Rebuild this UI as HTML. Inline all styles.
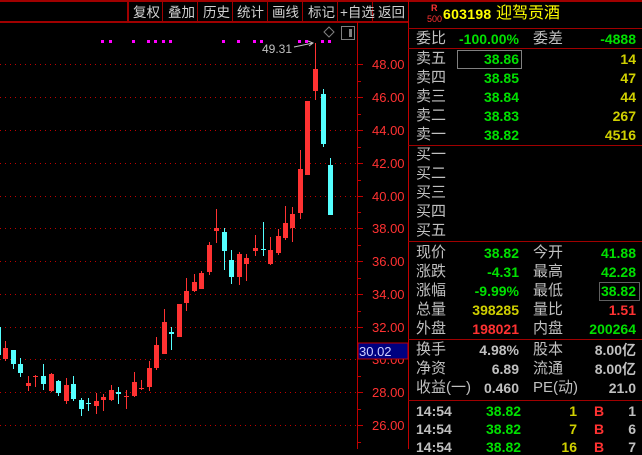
<!DOCTYPE html>
<html><head><meta charset="utf-8"><style>
body{margin:0;background:#000;width:642px;height:449px;overflow:hidden;position:relative;font-family:"Liberation Sans","Noto Sans CJK SC",sans-serif}
.t{position:absolute;white-space:nowrap;line-height:1}
.l{color:#c0c0c0;font-size:15px}
.n{font-size:14px;font-weight:bold}
.g{color:#00e000}.y{color:#d0d000}.r{color:#ff3232}.w{color:#c0c0c0}
.hr{position:absolute;left:408px;width:234px;height:1px;background:#a00000}
</style></head><body>
<svg width="642" height="449" style="position:absolute;left:0;top:0" font-family="Liberation Sans, Noto Sans CJK SC, sans-serif">
<rect x="0" y="0" width="642" height="2" fill="#a00000"/>
<rect x="0" y="21" width="409" height="2" fill="#a00000"/>
<rect x="127" y="2" width="2" height="19" fill="#a00000"/>
<g fill="#a00000"><rect x="162" y="2" width="1" height="19"/><rect x="197" y="2" width="1" height="19"/><rect x="232" y="2" width="1" height="19"/><rect x="267" y="2" width="1" height="19"/><rect x="302" y="2" width="1" height="19"/><rect x="337" y="2" width="1" height="19"/><rect x="372" y="2" width="1" height="19"/></g>
<g fill="#d0d0d0" font-size="13.5"><text x="133" y="17">复权</text><text x="168" y="17">叠加</text><text x="203" y="17">历史</text><text x="237" y="17">统计</text><text x="272" y="17">画线</text><text x="308" y="17">标记</text><text x="340" y="17">+自选</text><text x="378" y="17">返回</text></g>
<rect x="357" y="22" width="1" height="427" fill="#c00000"/>
<rect x="408" y="0" width="1" height="449" fill="#c00000"/>
<g stroke="#c00000" stroke-dasharray="1,4" stroke-width="1">
<line x1="0" y1="64.5" x2="356" y2="64.5"/><line x1="0" y1="97.5" x2="356" y2="97.5"/><line x1="0" y1="130.5" x2="356" y2="130.5"/><line x1="0" y1="163.5" x2="356" y2="163.5"/><line x1="0" y1="196.5" x2="356" y2="196.5"/><line x1="0" y1="228.5" x2="356" y2="228.5"/><line x1="0" y1="261.5" x2="356" y2="261.5"/><line x1="0" y1="294.5" x2="356" y2="294.5"/><line x1="0" y1="327.5" x2="356" y2="327.5"/><line x1="0" y1="359.5" x2="356" y2="359.5"/><line x1="0" y1="392.5" x2="356" y2="392.5"/><line x1="0" y1="425.5" x2="356" y2="425.5"/>
</g>
<g fill="#c00000"><rect x="358" y="64" width="5" height="1"/><rect x="358" y="97" width="5" height="1"/><rect x="358" y="130" width="5" height="1"/><rect x="358" y="163" width="5" height="1"/><rect x="358" y="196" width="5" height="1"/><rect x="358" y="228" width="5" height="1"/><rect x="358" y="261" width="5" height="1"/><rect x="358" y="294" width="5" height="1"/><rect x="358" y="327" width="5" height="1"/><rect x="358" y="392" width="5" height="1"/><rect x="358" y="425" width="5" height="1"/>
<rect x="358" y="81" width="3" height="1"/><rect x="358" y="114" width="3" height="1"/><rect x="358" y="147" width="3" height="1"/><rect x="358" y="180" width="3" height="1"/><rect x="358" y="212" width="3" height="1"/><rect x="358" y="245" width="3" height="1"/><rect x="358" y="278" width="3" height="1"/><rect x="358" y="311" width="3" height="1"/><rect x="358" y="376" width="3" height="1"/><rect x="358" y="409" width="3" height="1"/><rect x="358" y="442" width="3" height="1"/></g>
<g fill="#ff3232" font-size="13"><text x="372" y="69">48.00</text><text x="372" y="102">46.00</text><text x="372" y="135">44.00</text><text x="372" y="168">42.00</text><text x="372" y="201">40.00</text><text x="372" y="233">38.00</text><text x="372" y="266">36.00</text><text x="372" y="299">34.00</text><text x="372" y="332">32.00</text><text x="372" y="364">30.00</text><text x="372" y="397">28.00</text><text x="372" y="430">26.00</text></g>
<rect x="358" y="343" width="50" height="16" fill="#000080" stroke="#c00000"/>
<text x="359" y="356" fill="#d0d0ff" font-size="13">30.02</text>
<g fill="#ff00ff"><rect x="101" y="40" width="3" height="3"/><rect x="109" y="40" width="3" height="3"/><rect x="132" y="40" width="3" height="3"/><rect x="147" y="40" width="3" height="3"/><rect x="154" y="40" width="3" height="3"/><rect x="162" y="40" width="3" height="3"/><rect x="169" y="40" width="3" height="3"/><rect x="222" y="40" width="3" height="3"/><rect x="237" y="40" width="3" height="3"/><rect x="253" y="40" width="3" height="3"/><rect x="260" y="40" width="3" height="3"/><rect x="298" y="40" width="3" height="3"/><rect x="305" y="40" width="3" height="3"/><rect x="321" y="40" width="3" height="3"/><rect x="328" y="40" width="3" height="3"/></g>
<text x="262" y="53" fill="#c0c0c0" font-size="12">49.31</text>
<path d="M294 47 L313 43 M308 41 L313 43 L309 46" stroke="#c0c0c0" fill="none"/>
<path d="M329 27 L334 32 L329 37 L324 32 Z" stroke="#808080" fill="none"/>
<rect x="341.5" y="26.5" width="13" height="13" stroke="#808080" fill="none"/><rect x="349" y="29" width="3" height="8" fill="#808080"/>
<g stroke="#54ffff" fill="#54ffff"><line x1="0.5" y1="327" x2="0.5" y2="355"/></g>
<g>
<line x1="5.5" y1="341" x2="5.5" y2="361" stroke="#ff3232"/><rect x="3" y="348" width="5" height="11" fill="#ff3232"/>
<line x1="13.5" y1="350" x2="13.5" y2="369" stroke="#54ffff"/><rect x="11" y="350" width="5" height="14" fill="#54ffff"/>
<line x1="20.5" y1="358" x2="20.5" y2="377" stroke="#54ffff"/><rect x="18" y="364" width="5" height="9" fill="#54ffff"/>
<line x1="28.5" y1="376" x2="28.5" y2="391" stroke="#ff3232"/><rect x="26" y="383" width="5" height="3" fill="#ff3232"/>
<line x1="35.5" y1="375" x2="35.5" y2="387" stroke="#ff3232"/><rect x="33" y="376" width="5" height="1" fill="#ff3232"/>
<line x1="43.5" y1="364" x2="43.5" y2="390" stroke="#54ffff"/><rect x="41" y="376" width="5" height="8" fill="#54ffff"/>
<line x1="51.5" y1="373" x2="51.5" y2="392" stroke="#ff3232"/><rect x="49" y="374" width="5" height="17" fill="#ff3232"/>
<line x1="58.5" y1="380" x2="58.5" y2="396" stroke="#54ffff"/><rect x="56" y="381" width="5" height="12" fill="#54ffff"/>
<line x1="66.5" y1="378" x2="66.5" y2="404" stroke="#ff3232"/><rect x="64" y="385" width="5" height="16" fill="#ff3232"/>
<line x1="73.5" y1="376" x2="73.5" y2="401" stroke="#54ffff"/><rect x="71" y="384" width="5" height="15" fill="#54ffff"/>
<line x1="81.5" y1="398" x2="81.5" y2="416" stroke="#54ffff"/><rect x="79" y="400" width="5" height="9" fill="#54ffff"/>
<line x1="88.5" y1="398" x2="88.5" y2="411" stroke="#54ffff"/><rect x="86" y="403" width="5" height="1" fill="#54ffff"/>
<line x1="96.5" y1="393" x2="96.5" y2="414" stroke="#ff3232"/><rect x="94" y="401" width="5" height="5" fill="#ff3232"/>
<line x1="103.5" y1="394" x2="103.5" y2="411" stroke="#ff3232"/><rect x="101" y="397" width="5" height="3" fill="#ff3232"/>
<line x1="111.5" y1="385" x2="111.5" y2="401" stroke="#ff3232"/><rect x="109" y="390" width="5" height="10" fill="#ff3232"/>
<line x1="118.5" y1="387" x2="118.5" y2="404" stroke="#54ffff"/><rect x="116" y="392" width="5" height="2" fill="#54ffff"/>
<line x1="126.5" y1="390" x2="126.5" y2="409" stroke="#ff3232"/><rect x="124" y="396" width="5" height="1" fill="#ff3232"/>
<line x1="134.5" y1="372" x2="134.5" y2="397" stroke="#ff3232"/><rect x="132" y="382" width="5" height="14" fill="#ff3232"/>
<line x1="141.5" y1="380" x2="141.5" y2="390" stroke="#ff3232"/><rect x="139" y="388" width="5" height="1" fill="#ff3232"/>
<line x1="149.5" y1="361" x2="149.5" y2="391" stroke="#ff3232"/><rect x="147" y="368" width="5" height="19" fill="#ff3232"/>
<line x1="156.5" y1="337" x2="156.5" y2="370" stroke="#ff3232"/><rect x="154" y="345" width="5" height="23" fill="#ff3232"/>
<line x1="164.5" y1="309" x2="164.5" y2="354" stroke="#ff3232"/><rect x="162" y="322" width="5" height="32" fill="#ff3232"/>
<line x1="171.5" y1="327" x2="171.5" y2="350" stroke="#54ffff"/><rect x="169" y="332" width="5" height="2" fill="#54ffff"/>
<line x1="179.5" y1="304" x2="179.5" y2="337" stroke="#ff3232"/><rect x="177" y="304" width="5" height="33" fill="#ff3232"/>
<line x1="186.5" y1="278" x2="186.5" y2="311" stroke="#ff3232"/><rect x="184" y="291" width="5" height="12" fill="#ff3232"/>
<line x1="194.5" y1="274" x2="194.5" y2="292" stroke="#ff3232"/><rect x="192" y="282" width="5" height="9" fill="#ff3232"/>
<line x1="201.5" y1="271" x2="201.5" y2="289" stroke="#ff3232"/><rect x="199" y="273" width="5" height="16" fill="#ff3232"/>
<line x1="209.5" y1="242" x2="209.5" y2="275" stroke="#ff3232"/><rect x="207" y="245" width="5" height="27" fill="#ff3232"/>
<line x1="216.5" y1="209" x2="216.5" y2="243" stroke="#ff3232"/><rect x="214" y="228" width="5" height="3" fill="#ff3232"/>
<line x1="224.5" y1="228" x2="224.5" y2="270" stroke="#54ffff"/><rect x="222" y="232" width="5" height="19" fill="#54ffff"/>
<line x1="231.5" y1="250" x2="231.5" y2="284" stroke="#54ffff"/><rect x="229" y="260" width="5" height="17" fill="#54ffff"/>
<line x1="239.5" y1="252" x2="239.5" y2="285" stroke="#ff3232"/><rect x="237" y="254" width="5" height="23" fill="#ff3232"/>
<line x1="246.5" y1="254" x2="246.5" y2="281" stroke="#ff3232"/><rect x="244" y="258" width="5" height="6" fill="#ff3232"/>
<line x1="255.5" y1="235" x2="255.5" y2="256" stroke="#ff3232"/><rect x="253" y="248" width="5" height="3" fill="#ff3232"/>
<line x1="263.5" y1="222" x2="263.5" y2="256" stroke="#54ffff"/><rect x="261" y="249" width="5" height="1" fill="#54ffff"/>
<line x1="270.5" y1="237" x2="270.5" y2="265" stroke="#ff3232"/><rect x="268" y="250" width="5" height="14" fill="#ff3232"/>
<line x1="278.5" y1="229" x2="278.5" y2="255" stroke="#ff3232"/><rect x="276" y="236" width="5" height="17" fill="#ff3232"/>
<line x1="285.5" y1="206" x2="285.5" y2="240" stroke="#ff3232"/><rect x="283" y="223" width="5" height="15" fill="#ff3232"/>
<line x1="292.5" y1="207" x2="292.5" y2="242" stroke="#ff3232"/><rect x="290" y="214" width="5" height="14" fill="#ff3232"/>
<line x1="300.5" y1="150" x2="300.5" y2="219" stroke="#ff3232"/><rect x="298" y="169" width="5" height="44" fill="#ff3232"/>
<rect x="305" y="101" width="5" height="74" fill="#ff3232"/>
<line x1="315.5" y1="43" x2="315.5" y2="100" stroke="#ff3232"/><rect x="313" y="69" width="5" height="22" fill="#ff3232"/>
<line x1="323.5" y1="89" x2="323.5" y2="147" stroke="#54ffff"/><rect x="321" y="94" width="5" height="50" fill="#54ffff"/>
<line x1="330.5" y1="158" x2="330.5" y2="215" stroke="#54ffff"/><rect x="328" y="165" width="5" height="50" fill="#54ffff"/>
</g>
</svg>

<div class="hr" style="top:28px"></div>
<div class="hr" style="top:48px"></div>
<div class="hr" style="top:145px"></div>
<div class="hr" style="top:241px"></div>
<div class="hr" style="top:339px"></div>
<div class="hr" style="top:400px"></div>

<div class="t r" style="left:431px;top:4px;font-size:9px;font-weight:bold">R</div>
<div class="t r" style="left:427px;top:15px;font-size:9px">500</div>
<div class="t" style="left:443px;top:7px;font-size:14px;font-weight:bold;color:#ffff00;letter-spacing:0.3px">603198</div>
<div class="t" style="left:496px;top:6px;font-size:16px;color:#ffff00">迎驾贡酒</div>

<div class="t l" style="left:416px;top:31px">委比</div>
<div class="t n g" style="left:459px;top:32px">-100.00%</div>
<div class="t l" style="left:533px;top:31px">委差</div>
<div class="t n g" style="right:6px;top:32px">-4888</div>

<div style="position:absolute;left:457px;top:50px;width:63px;height:17px;border:1px solid #808080"></div>
<div class="t l" style="left:416px;top:51px">卖五</div><div class="t n g" style="right:123px;top:52px">38.86</div><div class="t n y" style="right:6px;top:52px">14</div>
<div class="t l" style="left:416px;top:70px">卖四</div><div class="t n g" style="right:123px;top:71px">38.85</div><div class="t n y" style="right:6px;top:71px">47</div>
<div class="t l" style="left:416px;top:89px">卖三</div><div class="t n g" style="right:123px;top:90px">38.84</div><div class="t n y" style="right:6px;top:90px">44</div>
<div class="t l" style="left:416px;top:108px">卖二</div><div class="t n g" style="right:123px;top:109px">38.83</div><div class="t n y" style="right:6px;top:109px">267</div>
<div class="t l" style="left:416px;top:127px">卖一</div><div class="t n g" style="right:123px;top:128px">38.82</div><div class="t n y" style="right:6px;top:128px">4516</div>

<div class="t l" style="left:416px;top:147px">买一</div>
<div class="t l" style="left:416px;top:166px">买二</div>
<div class="t l" style="left:416px;top:185px">买三</div>
<div class="t l" style="left:416px;top:204px">买四</div>
<div class="t l" style="left:416px;top:223px">买五</div>

<div class="t l" style="left:416px;top:245px">现价</div><div class="t n g" style="right:123px;top:246px">38.82</div><div class="t l" style="left:533px;top:245px">今开</div><div class="t n g" style="right:6px;top:246px">41.88</div>
<div class="t l" style="left:416px;top:264px">涨跌</div><div class="t n g" style="right:123px;top:265px">-4.31</div><div class="t l" style="left:533px;top:264px">最高</div><div class="t n g" style="right:6px;top:265px">42.28</div>
<div class="t l" style="left:416px;top:283px">涨幅</div><div class="t n g" style="right:123px;top:284px">-9.99%</div><div class="t l" style="left:533px;top:283px">最低</div>
<div style="position:absolute;left:599px;top:282px;width:39px;height:17px;border:1px solid #606060"></div><div class="t n g" style="right:6px;top:284px">38.82</div>
<div class="t l" style="left:416px;top:302px">总量</div><div class="t n y" style="right:123px;top:303px">398285</div><div class="t l" style="left:533px;top:302px">量比</div><div class="t n r" style="right:6px;top:303px">1.51</div>
<div class="t l" style="left:416px;top:321px">外盘</div><div class="t n r" style="right:123px;top:322px">198021</div><div class="t l" style="left:533px;top:321px">内盘</div><div class="t n g" style="right:6px;top:322px">200264</div>

<div class="t l" style="left:416px;top:342px">换手</div><div class="t n w" style="right:123px;top:343px">4.98%</div><div class="t l" style="left:533px;top:342px">股本</div><div class="t n w" style="right:6px;top:343px">8.00亿</div>
<div class="t l" style="left:416px;top:361px">净资</div><div class="t n w" style="right:123px;top:362px">6.89</div><div class="t l" style="left:533px;top:361px">流通</div><div class="t n w" style="right:6px;top:362px">8.00亿</div>
<div class="t l" style="left:416px;top:380px">收益(一)</div><div class="t n w" style="right:123px;top:381px">0.460</div><div class="t l" style="left:533px;top:380px">PE(动)</div><div class="t n w" style="right:6px;top:381px">21.0</div>

<div class="t n w" style="left:416px;top:404px">14:54</div><div class="t n g" style="left:486px;top:404px">38.82</div><div class="t n y" style="right:65px;top:404px">1</div><div class="t n r" style="left:594px;top:404px">B</div><div class="t n w" style="right:6px;top:404px">1</div>
<div class="t n w" style="left:416px;top:422px">14:54</div><div class="t n g" style="left:486px;top:422px">38.82</div><div class="t n y" style="right:65px;top:422px">7</div><div class="t n r" style="left:594px;top:422px">B</div><div class="t n w" style="right:6px;top:422px">6</div>
<div class="t n w" style="left:416px;top:440px">14:54</div><div class="t n g" style="left:486px;top:440px">38.82</div><div class="t n y" style="right:65px;top:440px">16</div><div class="t n r" style="left:594px;top:440px">B</div><div class="t n w" style="right:6px;top:440px">7</div>
</body></html>
